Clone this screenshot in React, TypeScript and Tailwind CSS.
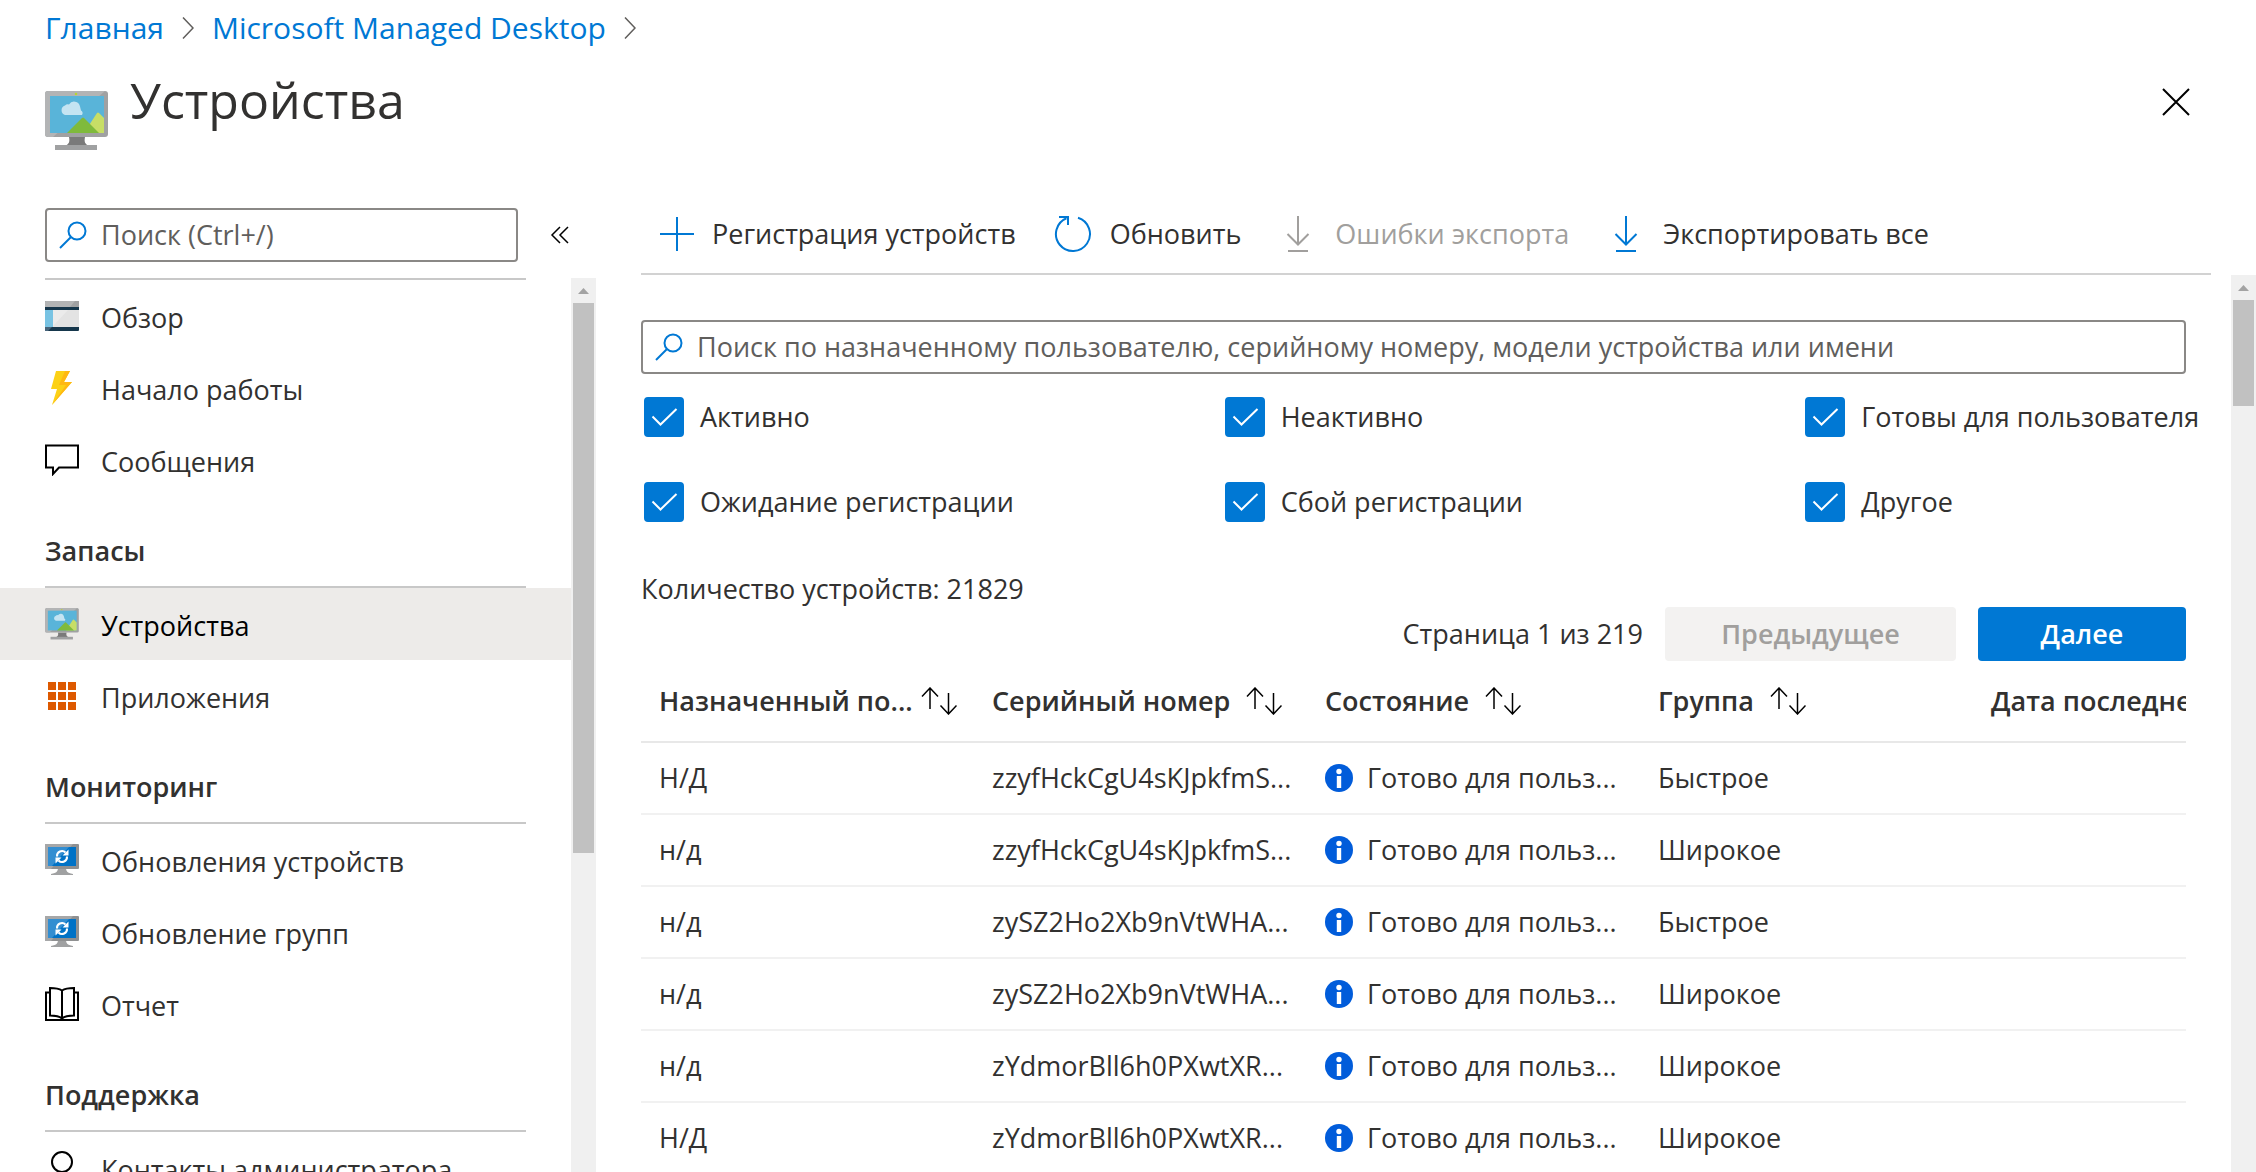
import { useId } from "react";
import type { ReactNode } from "react";

function DeviceIcon({ className }: { className: string }) {
  return (
    <svg viewBox="0 0 63 60" className={className} aria-hidden="true">
      <path d="M24 46h16c-1 5 0 7 4 9H20c4-2 5-4 4-9Z" fill="#7a7a7a" />
      <rect x="10" y="54" width="42" height="5" fill="#a0a1a2" />
      <rect x="0" y="0" width="63" height="46" rx="3" fill="#a0a1a2" />
      <path d="M3 0h57L8 46H3a3 3 0 0 1-3-3V3a3 3 0 0 1 3-3Z" fill="#b3b4b5" />
      <rect x="5" y="5" width="54" height="37" fill="#59b4d9" />
      <circle cx="31" cy="3" r="1.3" fill="#b8d432" />
      <path d="M20 24a5 5 0 0 1 0-9.500 4 4 0 0 1 4-1 6 6 0 0 1 11 2l1 4a3 3 0 0 1 1 4.500Z" fill="#c4e4f2" />
      <path d="M39 42 52 22q1-1 2 0l5 5v15Z" fill="#c7de66" />
      <path d="M22 42 37 27q1-1 2 0l15 15Z" fill="#7fba3c" />
    </svg>
  );
}

function UpdateIcon() {
  return (
    <svg viewBox="0 0 34 32" className="h-8 w-[34px]" aria-hidden="true">
      <path d="M13 23h8c0 4 1 6 7 7v1H6v-1c6-1 7-3 7-7Z" fill="#a0a1a2" />
      <rect width="34" height="25" rx="1" fill="#8f9091" />
      <path d="M1 0h27L6 25H1a1 1 0 0 1-1-1V1a1 1 0 0 1 1-1Z" fill="#a6a7a8" />
      <rect x="3" y="3" width="28" height="19" fill="#0072c6" />
      <path d="M3 3h21L7 22H3Z" fill="#338ed1" />
      <g fill="none" stroke="#fff" strokeWidth="2">
        <path d="M12 12.500a5 5 0 0 1 8.500-4" />
        <path d="M22 12.500a5 5 0 0 1-8.500 4" />
      </g>
      <path d="M23.500 5.500v6h-6ZM10.500 19.500v-6h6Z" fill="#fff" />
    </svg>
  );
}

function OverviewIcon() {
  return (
    <svg viewBox="0 0 34 30" className="h-[30px] w-[34px]" aria-hidden="true">
      <rect width="34" height="30" rx="1" fill="#16374c" />
      <path d="M1 0h33v6H0V1a1 1 0 0 1 1-1Z" fill="#a0a1a2" />
      <path d="M1 0h29l-5 6H0V1a1 1 0 0 1 1-1Z" fill="#b3b4b5" />
      <rect x="0" y="9" width="8" height="17" fill="#78c3e3" />
      <rect x="8" y="9" width="26" height="17" fill="#e3e3e3" />
      <path d="M8 9h15L8 25Z" fill="#ebebeb" />
      <path d="M0 26h7l-4 4H0Z" fill="#47647a" />
    </svg>
  );
}

function BoltIcon() {
  return (
    <svg viewBox="0 0 34 34" className="h-[34px] w-[34px]" aria-hidden="true">
      <path d="M11 0h14l-6 11h8L7 34l5-16H6Z" fill="#fcd116" />
      <path d="M20 0h5l-6 11h8L7 34 21 14h-7Z" fill="#ffb813" />
    </svg>
  );
}

function MessageIcon() {
  return (
    <svg viewBox="0 0 34 32" className="h-8 w-[34px]" aria-hidden="true">
      <path d="M1 1.500h32v22H14L8 30v-6.500H1Z" fill="none" stroke="#000" strokeWidth="2" />
    </svg>
  );
}

function AppsIcon() {
  const cells = [0, 10, 20];
  return (
    <svg viewBox="0 0 34 28" className="h-7 w-[34px]" aria-hidden="true">
      {cells.map((y) =>
        cells.map((x) => <rect key={`${x}-${y}`} x={x + 3} y={y} width="8" height="8" fill="#dd5900" />),
      )}
    </svg>
  );
}

function BookIcon() {
  return (
    <svg viewBox="0 0 34 34" className="h-[34px] w-[34px]" aria-hidden="true">
      <g fill="none" stroke="#000" strokeWidth="2">
        <path d="M5 5.500H1V33h32V5.500h-4" />
        <path d="M17 3.500C14 1.500 9 1 5 1v27.500c5 0 9 .5 12 3 3-2.500 7-3 12-3V1c-4 0-9 .5-12 2.500ZM17 3.500v28" />
      </g>
    </svg>
  );
}

function PersonIcon() {
  return (
    <svg viewBox="0 0 34 34" className="h-[34px] w-[34px]" aria-hidden="true">
      <g fill="none" stroke="#000" strokeWidth="2">
        <circle cx="17" cy="11" r="10" />
        <path d="M3 34c0-8 6-13 14-13s14 5 14 13" />
      </g>
    </svg>
  );
}

function SearchIcon() {
  return (
    <svg viewBox="0 0 28 28" className="size-7 shrink-0" aria-hidden="true">
      <g fill="none" stroke="#0078d4" strokeWidth="2">
        <circle cx="18" cy="10" r="8.500" />
        <path d="M12 16 1 27" />
      </g>
    </svg>
  );
}

function ChevronIcon() {
  return (
    <svg viewBox="0 0 12 22" className="h-[22px] w-3" aria-hidden="true">
      <path d="m1 .5 10 10.500L1 21.500" fill="none" stroke="#605e5c" strokeWidth="1.500" />
    </svg>
  );
}

function PlusIcon() {
  return (
    <svg viewBox="0 0 34 34" className="size-[34px]" aria-hidden="true">
      <path d="M17 0v34M0 17h34" stroke="#0078d4" strokeWidth="2" />
    </svg>
  );
}

function RefreshIcon() {
  return (
    <svg viewBox="0 0 38 38" className="size-[38px]" aria-hidden="true">
      <g fill="none" stroke="#0078d4" strokeWidth="2">
        <path d="M24 2.800a17 17 0 1 1-11.500.5" />
        <path d="M5 2h9v8" />
      </g>
    </svg>
  );
}

function DownloadIcon({ color }: { color: string }) {
  return (
    <svg viewBox="0 0 38 38" className="size-[38px]" aria-hidden="true">
      <path d="M19 1v29M8.500 19 19 29.500 29.500 19M9 36h20" fill="none" stroke={color} strokeWidth="2" />
    </svg>
  );
}

function SortIcon() {
  return (
    <svg viewBox="0 0 36 28" className="h-7 w-9 shrink-0" aria-hidden="true">
      <path
        d="M9 1v21M1 9.500 9 1l8 8.500M27.500 6v21M19.500 18.500l8 8.500 8-8.500"
        fill="none"
        stroke="#000"
        strokeWidth="1.500"
      />
    </svg>
  );
}

function InfoIcon() {
  return (
    <svg viewBox="0 0 28 28" className="size-7 shrink-0" aria-hidden="true">
      <circle cx="14" cy="14" r="14" fill="#015cda" />
      <circle cx="14" cy="7.500" r="2.700" fill="#fff" />
      <rect x="11.800" y="12" width="4.400" height="12" fill="#fff" />
    </svg>
  );
}

type NavEntry = { label: string; icon: ReactNode; active?: boolean };
type NavGroup = { title?: string; items: NavEntry[] };

const navGroups: NavGroup[] = [
  {
    items: [
      { label: "Обзор", icon: <OverviewIcon /> },
      { label: "Начало работы", icon: <BoltIcon /> },
      { label: "Сообщения", icon: <MessageIcon /> },
    ],
  },
  {
    title: "Запасы",
    items: [
      { label: "Устройства", icon: <DeviceIcon className="h-8 w-[34px]" />, active: true },
      { label: "Приложения", icon: <AppsIcon /> },
    ],
  },
  {
    title: "Мониторинг",
    items: [
      { label: "Обновления устройств", icon: <UpdateIcon /> },
      { label: "Обновление групп", icon: <UpdateIcon /> },
      { label: "Отчет", icon: <BookIcon /> },
    ],
  },
  {
    title: "Поддержка",
    items: [{ label: "Контакты администратора", icon: <PersonIcon /> }],
  },
];

const filters = [
  "Активно",
  "Неактивно",
  "Готовы для пользователя",
  "Ожидание регистрации",
  "Сбой регистрации",
  "Другое",
];

const columns = ["Назначенный по...", "Серийный номер", "Состояние", "Группа", "Дата последней проверки"];

const status = "Готово для польз...";
const devices = [
  { user: "Н/Д", serial: "zzyfHckCgU4sKJpkfmS...", group: "Быстрое" },
  { user: "н/д", serial: "zzyfHckCgU4sKJpkfmS...", group: "Широкое" },
  { user: "н/д", serial: "zySZ2Ho2Xb9nVtWHA...", group: "Быстрое" },
  { user: "н/д", serial: "zySZ2Ho2Xb9nVtWHA...", group: "Широкое" },
  { user: "н/д", serial: "zYdmorBll6h0PXwtXR...", group: "Широкое" },
  { user: "Н/Д", serial: "zYdmorBll6h0PXwtXR...", group: "Широкое" },
];

function SearchBox({ placeholder, className }: { placeholder: string; className: string }) {
  return (
    <label className={`flex h-[54px] items-center gap-[14px] rounded border-2 border-[#8a8886] px-3 ${className}`}>
      <SearchIcon />
      <input
        type="search"
        aria-label={placeholder}
        placeholder={placeholder}
        className="min-w-0 flex-1 outline-none placeholder:text-[#605e5c] placeholder:opacity-100"
      />
    </label>
  );
}

function Scrollbar({ thumb }: { thumb: string }) {
  return (
    <div className="flex w-[25px] shrink-0 flex-col items-center bg-[#f0f0f0]" aria-hidden="true">
      <svg viewBox="0 0 25 25" className="size-[25px]">
        <path d="M7 16h11l-5.500-6Z" fill="#a3a3a3" />
      </svg>
      <div className={`w-[21px] bg-[#c1c1c1] ${thumb}`} />
    </div>
  );
}

function ToolbarButton({ icon, label, disabled }: { icon: ReactNode; label: string; disabled?: boolean }) {
  return (
    <button
      type="button"
      disabled={disabled}
      className="flex items-center gap-[18px] text-[#323130] disabled:text-[#a19f9d]"
    >
      {icon}
      {label}
    </button>
  );
}

function FilterCheckbox({ label }: { label: string }) {
  const id = useId();
  return (
    <div className="flex items-center gap-4">
      <span className="grid size-10 shrink-0">
        <input
          id={id}
          type="checkbox"
          defaultChecked
          className="peer col-start-1 row-start-1 size-10 appearance-none rounded border-2 border-[#0078d4] bg-white checked:bg-[#0078d4]"
        />
        <svg
          viewBox="0 0 40 40"
          className="pointer-events-none invisible col-start-1 row-start-1 size-10 peer-checked:visible"
          aria-hidden="true"
        >
          <path d="m8.500 19.500 8 8L32.500 12" fill="none" stroke="#fff" strokeWidth="2" />
        </svg>
      </span>
      <label htmlFor={id} className="leading-10">
        {label}
      </label>
    </div>
  );
}

function Sidebar() {
  return (
    <aside className="flex w-[596px] shrink-0 flex-col pt-[13px]">
      <div className="flex items-center pr-6 pl-[45px]">
        <SearchBox placeholder="Поиск (Ctrl+/)" className="w-[473px]" />
        <button type="button" aria-label="Свернуть меню" className="ml-8 text-black">
          <svg viewBox="0 0 20 18" className="h-[18px] w-5" aria-hidden="true">
            <path d="M10 1 2 9l8 8M18 1l-8 8 8 8" fill="none" stroke="currentColor" strokeWidth="1.500" />
          </svg>
        </button>
      </div>
      <div className="mt-4 flex min-h-0 flex-1">
        <nav className="flex-1 overflow-hidden" aria-label="Разделы">
          {navGroups.map((group, index) => (
            <section key={index}>
              <div className="mr-[45px] ml-[45px] border-b-2 border-[#c8c8c8]">
                {group.title && (
                  <h2 className="flex h-[90px] items-center pt-5 font-semibold">{group.title}</h2>
                )}
              </div>
              <ul>
                {group.items.map((item) => (
                  <li key={item.label}>
                    <a
                      href="#"
                      aria-current={item.active ? "page" : undefined}
                      className="flex h-[72px] items-center gap-[22px] pl-[45px] aria-[current=page]:bg-[#edebe9] aria-[current=page]:text-black"
                    >
                      {item.icon}
                      <span className="pt-1">{item.label}</span>
                    </a>
                  </li>
                ))}
              </ul>
            </section>
          ))}
        </nav>
        <Scrollbar thumb="h-[550px]" />
      </div>
    </aside>
  );
}

function DeviceTable() {
  return (
    <div className="overflow-hidden">
      <table className="w-[1710px] table-fixed text-left">
        <thead>
          <tr className="h-[81px] border-b-2 border-[#e8e8e8]">
            {columns.map((column, index) => (
              <th key={column} scope="col" className="w-[333px] p-0 pl-[18px] font-semibold last:w-[378px]">
                <button type="button" className={index === 0 ? "flex items-center gap-2" : "flex items-center gap-4"}>
                  {column}
                  <SortIcon />
                </button>
              </th>
            ))}
          </tr>
        </thead>
        <tbody>
          {devices.map((device, index) => (
            <tr key={index} className="h-[72px] border-b-2 border-[#f1f1f1]">
              <td className="p-0 pl-[18px]">{device.user}</td>
              <td className="p-0 pl-[18px]">{device.serial}</td>
              <td className="p-0 pl-[18px]">
                <span className="flex items-center gap-[14px]">
                  <InfoIcon />
                  {status}
                </span>
              </td>
              <td className="p-0 pl-[18px]">{device.group}</td>
              <td />
            </tr>
          ))}
        </tbody>
      </table>
    </div>
  );
}

export default function App() {
  return (
    <div className="flex h-screen flex-col overflow-hidden bg-white font-['Open_Sans','Noto_Sans',sans-serif] text-[27px] leading-9 whitespace-nowrap text-[#323130]">
      <nav
        className="flex h-14 shrink-0 items-center gap-[18px] pl-[45px] text-[30px] text-[#0078d4]"
        aria-label="Навигация"
      >
        <a href="#">Главная</a>
        <ChevronIcon />
        <a href="#">Microsoft Managed Desktop</a>
        <ChevronIcon />
      </nav>
      <header className="flex h-[139px] shrink-0 items-start pr-[60px] pl-[45px]">
        <DeviceIcon className="mt-[35px] h-[60px] w-[63px]" />
        <h1 className="mt-3 ml-[22px] text-[50px] leading-[64px]">Устройства</h1>
        <button type="button" aria-label="Закрыть" className="mt-[26px] ml-auto flex size-10 items-center justify-center">
          <svg viewBox="0 0 28 28" className="size-7" aria-hidden="true">
            <path d="m1 1 26 26M27 1 1 27" stroke="#000" strokeWidth="2" />
          </svg>
        </button>
      </header>
      <div className="flex min-h-0 flex-1">
        <Sidebar />
        <main className="ml-[45px] flex min-w-0 flex-1 flex-col">
          <div className="mr-[45px] flex h-20 shrink-0 items-center gap-[38px] border-b-2 border-[#d2d2d2] pl-[19px]">
            <ToolbarButton icon={<PlusIcon />} label="Регистрация устройств" />
            <ToolbarButton icon={<RefreshIcon />} label="Обновить" />
            <ToolbarButton icon={<DownloadIcon color="#a19f9d" />} label="Ошибки экспорта" disabled />
            <ToolbarButton icon={<DownloadIcon color="#0078d4" />} label="Экспортировать все" />
          </div>
          <div className="flex min-h-0 flex-1">
            <div className="mr-[45px] min-w-0 flex-1">
              <SearchBox
                placeholder="Поиск по назначенному пользователю, серийному номеру, модели устройства или имени"
                className="mt-[45px]"
              />
              <div className="mt-[23px] grid grid-cols-[minmax(0,61fr)_minmax(0,61fr)_minmax(0,40fr)] gap-y-[45px] pl-[3px]">
                {filters.map((label) => (
                  <FilterCheckbox key={label} label={label} />
                ))}
              </div>
              <p className="mt-[49px]">Количество устройств: 21829</p>
              <div className="flex items-center justify-end gap-[22px]">
                <span>Страница 1 из 219</span>
                <button
                  type="button"
                  disabled
                  className="h-[54px] w-[291px] rounded bg-[#f3f2f1] font-semibold text-[#a19f9d]"
                >
                  Предыдущее
                </button>
                <button type="button" className="h-[54px] w-[208px] rounded bg-[#0078d4] font-semibold text-white">
                  Далее
                </button>
              </div>
              <DeviceTable />
            </div>
            <Scrollbar thumb="h-[106px]" />
          </div>
        </main>
      </div>
    </div>
  );
}
